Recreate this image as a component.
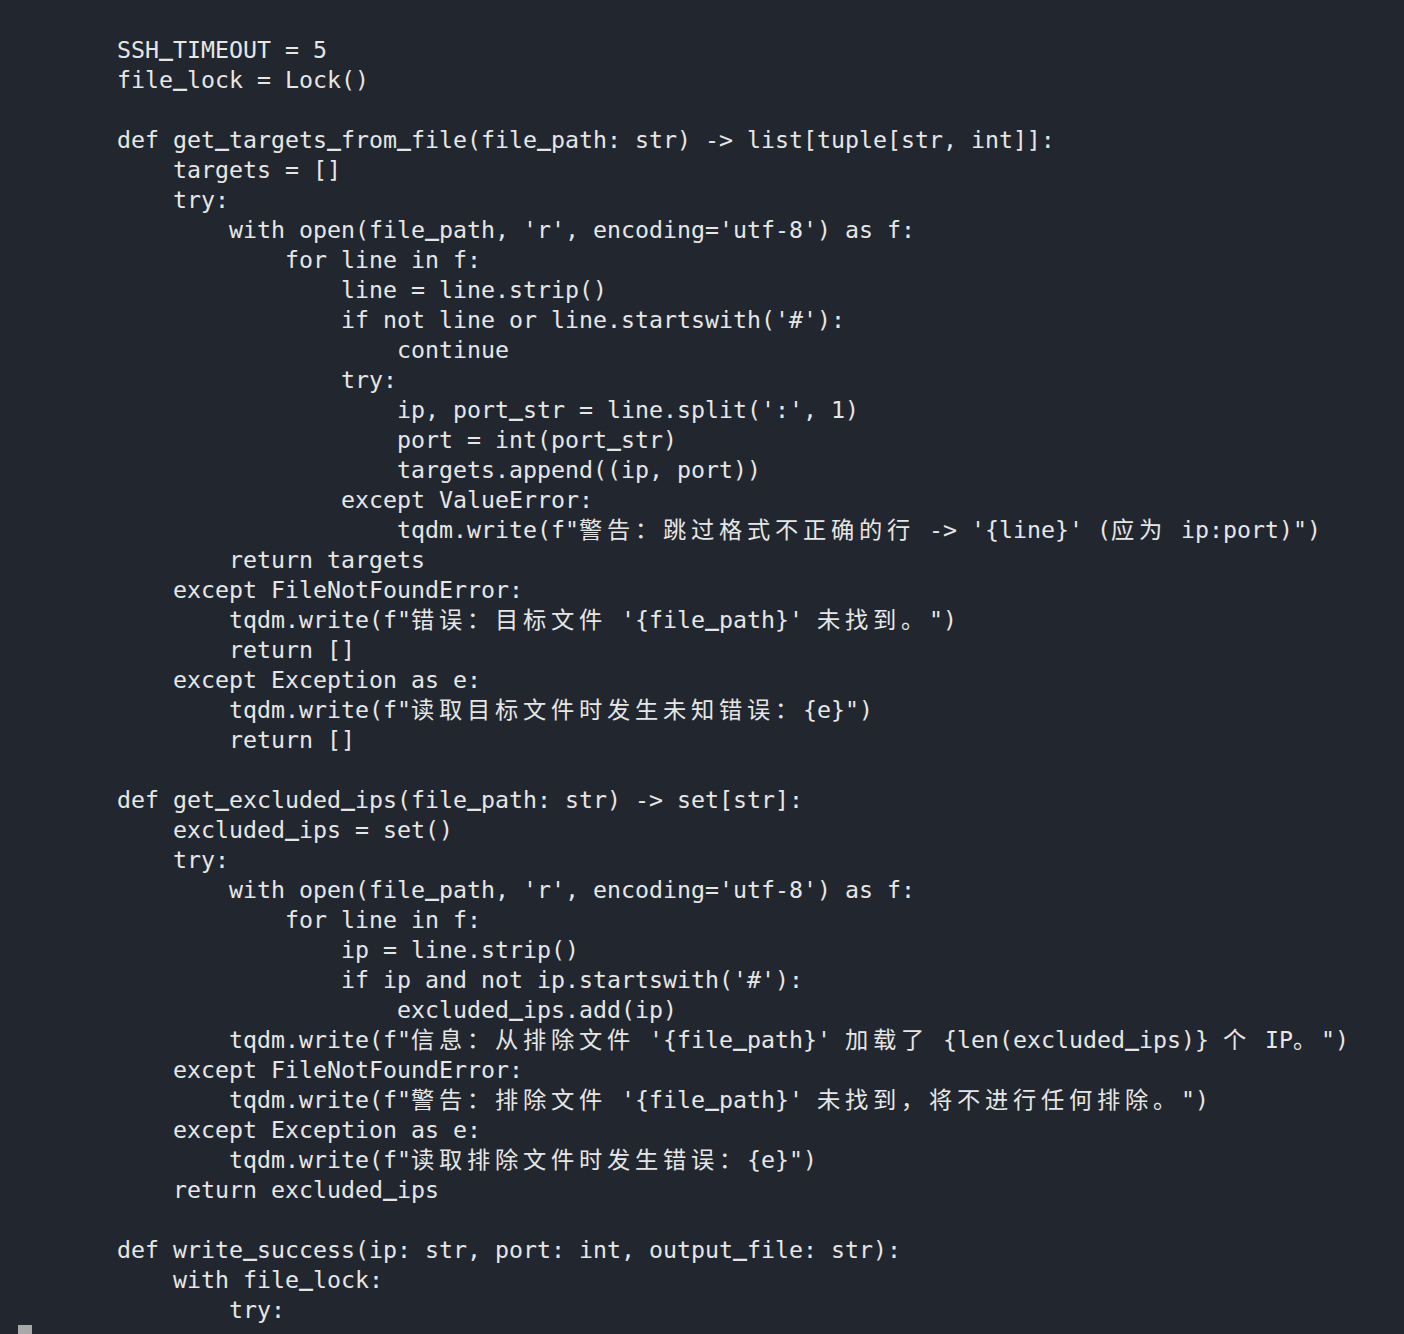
const lines = [
  'SSH_TIMEOUT = 5',
  'file_lock = Lock()',
  '',
  'def get_targets_from_file(file_path: str) -> list[tuple[str, int]]:',
  '    targets = []',
  '    try:',
  "        with open(file_path, 'r', encoding='utf-8') as f:",
  '            for line in f:',
  '                line = line.strip()',
  "                if not line or line.startswith('#'):",
  '                    continue',
  '                try:',
  "                    ip, port_str = line.split(':', 1)",
  '                    port = int(port_str)',
  '                    targets.append((ip, port))',
  '                except ValueError:',
  "                    tqdm.write(f\"警告：跳过格式不正确的行 -> '{line}' (应为 ip:port)\")",
  '        return targets',
  '    except FileNotFoundError:',
  "        tqdm.write(f\"错误：目标文件 '{file_path}' 未找到。\")",
  '        return []',
  '    except Exception as e:',
  '        tqdm.write(f"读取目标文件时发生未知错误：{e}")',
  '        return []',
  '',
  'def get_excluded_ips(file_path: str) -> set[str]:',
  '    excluded_ips = set()',
  '    try:',
  "        with open(file_path, 'r', encoding='utf-8') as f:",
  '            for line in f:',
  '                ip = line.strip()',
  "                if ip and not ip.startswith('#'):",
  '                    excluded_ips.add(ip)',
  "        tqdm.write(f\"信息：从排除文件 '{file_path}' 加载了 {len(excluded_ips)} 个 IP。\")",
  '    except FileNotFoundError:',
  "        tqdm.write(f\"警告：排除文件 '{file_path}' 未找到，将不进行任何排除。\")",
  '    except Exception as e:',
  '        tqdm.write(f"读取排除文件时发生错误：{e}")',
  '    return excluded_ips',
  '',
  'def write_success(ip: str, port: int, output_file: str):',
  '    with file_lock:',
  '        try:',
]

const wide = /[\u3000-\u9fff\uff00-\uffef]/

// terminal cells: CJK glyphs take two columns, underscores sit a little higher
function Line({ text }) {
  const parts = []
  let buf = ''
  const flush = () => {
    if (buf) parts.push(buf)
    buf = ''
  }
  for (const ch of text) {
    if (wide.test(ch)) {
      flush()
      parts.push(
        <span key={parts.length} className="inline-block w-[28px] text-left">
          {ch}
        </span>
      )
    } else if (ch === '_') {
      flush()
      parts.push(
        <span key={parts.length} className="relative top-[-2px] font-bold">
          _
        </span>
      )
    } else {
      buf += ch
    }
  }
  flush()
  return <div className="h-[30px] leading-[30px] whitespace-pre">{parts}</div>
}

export default function App() {
  return (
    <div
      className="h-[1334px] w-full overflow-hidden bg-[#22262f] text-[#e6e6e6] text-[23.25px] pt-[35px]"
      style={{ fontFamily: '"DejaVu Sans Mono", "Noto Sans CJK SC", monospace' }}
    >
      <div className="pl-[117px]">
        {lines.map((l, i) => (
          <Line key={i} text={l} />
        ))}
      </div>
      <div className="ml-[18px] w-[14px] h-[30px] bg-[#a8a8a8]" />
    </div>
  )
}
